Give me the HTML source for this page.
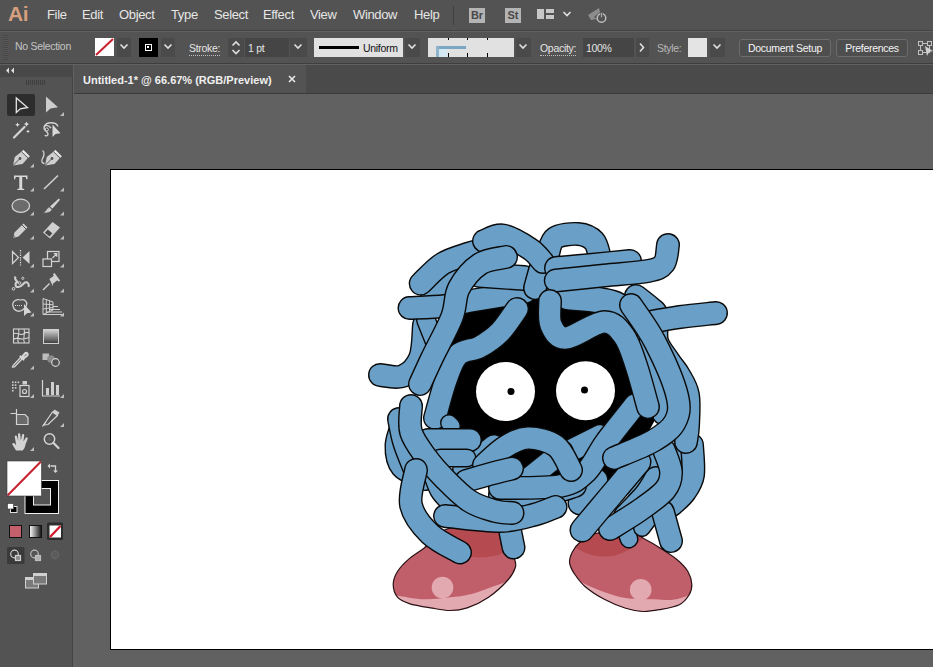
<!DOCTYPE html>
<html><head><meta charset="utf-8">
<style>
*{box-sizing:border-box;margin:0;padding:0}
html,body{width:933px;height:667px;overflow:hidden;background:#606060;font-family:"Liberation Sans",sans-serif;}
#app{position:relative;width:933px;height:667px;background:#616161;overflow:hidden}
.abs{position:absolute}
#menubar{left:0;top:0;width:933px;height:31px;background:#535353;border-bottom:1px solid #424242}
#menubar span{position:absolute;top:7px;font-size:13px;color:#e6e6e6;letter-spacing:-0.35px}
.brst{top:8px;width:16px;height:15px;background:#b4b4b4;color:#484848;font-size:11px;font-weight:bold;text-align:center;line-height:15px}
#ctrl{left:0;top:32px;width:933px;height:32px;background:#535353;border-bottom:1px solid #3e3e3e}
.lbl{font-size:10.5px;color:#e4e4e4;white-space:nowrap;letter-spacing:-0.3px}
.cbtn{top:7px;height:18px;border:1px solid #6c6c6c;border-radius:3px;background:#4e4e4e;color:#f4f4f4;font-size:10.5px;letter-spacing:-0.3px;text-align:center;line-height:16px;white-space:nowrap}
#tools{left:0;top:65px;width:73px;height:602px;background:#535353;border-right:1px solid #434343}
#tabbar{left:74px;top:65px;width:859px;height:29px;background:#4a4a4a;border-bottom:1px solid #3a3a3a}
#tab{left:74px;top:65px;width:232px;height:28px;background:#535353}
#canvas{left:74px;top:94px;width:859px;height:573px;background:#616161}
#art{left:110px;top:169px;width:830px;height:481px;background:#fff;border:1px solid #000}
</style></head><body>
<div id="app">
<div id="canvas" class="abs"></div>
<div id="art" class="abs"></div>
<div id="menubar" class="abs">
<div class="abs" style="left:8px;top:2px;font-size:21px;font-weight:bold;color:#d6a080;letter-spacing:-0.5px">Ai</div>
<span style="left:47px">File</span><span style="left:82px">Edit</span><span style="left:119px">Object</span><span style="left:171px">Type</span><span style="left:214px">Select</span><span style="left:263px">Effect</span><span style="left:310px">View</span><span style="left:353px">Window</span><span style="left:414px">Help</span>
<div class="abs" style="left:453px;top:6px;width:1px;height:19px;background:#404040"></div>
<div class="abs brst" style="left:469px">Br</div>
<div class="abs brst" style="left:505px">St</div>
<div class="abs" style="left:537px;top:9px;width:7px;height:10px;background:#c8c8c8"></div>
<div class="abs" style="left:546px;top:9px;width:8px;height:4px;background:#c8c8c8"></div>
<div class="abs" style="left:546px;top:15px;width:8px;height:4px;background:#c8c8c8"></div>
<svg class="abs" style="left:562px;top:10px" width="10" height="8"><path d="M1.5 2 L5 5.5 L8.5 2" fill="none" stroke="#e0e0e0" stroke-width="1.6"/></svg>
<svg class="abs" style="left:586px;top:6px" width="24" height="20"><path d="M2 9 L13 2 L14 6 L8 11 L11 13 L5 14 Z" fill="#8c8c8c"/><circle cx="15.500" cy="12" r="4.300" fill="none" stroke="#bdbdbd" stroke-width="1.5"/><rect x="14.700" y="6" width="1.600" height="6" fill="#bdbdbd" stroke="#535353" stroke-width="0.8"/></svg>
</div>
<div id="ctrl" class="abs">
<div class="abs" style="left:3px;top:3px;width:5px;height:25px;background:repeating-linear-gradient(180deg,#474747 0 1px,#585858 1px 2px)"></div>
<div class="abs lbl" style="left:15px;top:8px;color:#c4c4c4">No Selection</div>
<div class="abs" style="left:95px;top:6px;width:19px;height:18px;background:#fff"><svg width="19" height="18"><path d="M1 17 L18 1" stroke="#c8202f" stroke-width="2"/></svg></div>
<div class="abs" style="left:117px;top:6px;width:14px;height:19px;background:#4a4a4a"></div><svg class="abs" style="left:119px;top:11px" width="10" height="8"><path d="M1.500 1.500 L5 5 L8.500 1.500" fill="none" stroke="#e0e0e0" stroke-width="1.600"/></svg>
<div class="abs" style="left:139px;top:6px;width:19px;height:19px;background:#000"><div class="abs" style="left:6px;top:6px;width:7px;height:7px;border:1.500px solid #fff;background:#000"><div class="abs" style="left:1px;top:1px;width:2px;height:2px;background:#fff"></div></div></div>
<div class="abs" style="left:161px;top:6px;width:14px;height:19px;background:#4a4a4a"></div><svg class="abs" style="left:163px;top:11px" width="10" height="8"><path d="M1.500 1.500 L5 5 L8.500 1.500" fill="none" stroke="#e0e0e0" stroke-width="1.600"/></svg>
<div class="abs lbl" style="left:189px;top:10px;border-bottom:1px dotted #c0c0c0;line-height:13px">Stroke:</div>
<div class="abs" style="left:228px;top:6px;width:16px;height:19px;background:#4a4a4a"></div>
<svg class="abs" style="left:231px;top:8px" width="10" height="16"><path d="M1.500 5.500 L5 2 L8.500 5.500" fill="none" stroke="#e0e0e0" stroke-width="1.600"/><path d="M1.500 10 L5 13.500 L8.500 10" fill="none" stroke="#e0e0e0" stroke-width="1.600"/></svg>
<div class="abs" style="left:245px;top:6px;width:44px;height:19px;background:#454545"></div>
<div class="abs lbl" style="left:248px;top:9.500px">1 pt</div>
<div class="abs" style="left:290px;top:6px;width:17px;height:19px;background:#4a4a4a"></div><svg class="abs" style="left:293px;top:11px" width="10" height="8"><path d="M1.500 1.500 L5 5 L8.500 1.500" fill="none" stroke="#e0e0e0" stroke-width="1.600"/></svg>
<div class="abs" style="left:314px;top:6px;width:89px;height:19px;background:#e1e1e1"></div>
<div class="abs" style="left:319px;top:14px;width:40px;height:3px;background:#000"></div>
<div class="abs" style="left:363px;top:10px;font-size:10.500px;letter-spacing:-0.3px;color:#111">Uniform</div>
<div class="abs" style="left:405px;top:6px;width:15px;height:19px;background:#4a4a4a"></div><svg class="abs" style="left:407px;top:11px" width="10" height="8"><path d="M1.500 1.500 L5 5 L8.500 1.500" fill="none" stroke="#e0e0e0" stroke-width="1.600"/></svg>
<div class="abs" style="left:428px;top:6px;width:86px;height:19px;background:#e1e1e1"></div>
<div class="abs" style="left:439px;top:17px;width:8px;height:8px;background:#d4e8f3"></div><div class="abs" style="left:436px;top:14px;width:30px;height:3px;background:#7aa7c4"></div>
<div class="abs" style="left:436px;top:14px;width:3px;height:11px;background:#8fb4cc"></div>
<div class="abs" style="left:448px;top:6px;width:1px;height:19px;background:repeating-linear-gradient(180deg,#000 0 2px,transparent 2px 15px,#000 15px 19px)"></div>
<div class="abs" style="left:467px;top:6px;width:1px;height:19px;background:repeating-linear-gradient(180deg,#000 0 2px,transparent 2px 15px,#000 15px 19px)"></div>
<div class="abs" style="left:487px;top:6px;width:1px;height:19px;background:repeating-linear-gradient(180deg,#000 0 2px,transparent 2px 15px,#000 15px 19px)"></div>
<div class="abs" style="left:516px;top:6px;width:15px;height:19px;background:#4a4a4a"></div><svg class="abs" style="left:518px;top:11px" width="10" height="8"><path d="M1.500 1.500 L5 5 L8.500 1.500" fill="none" stroke="#e0e0e0" stroke-width="1.600"/></svg>
<div class="abs lbl" style="left:540px;top:9.500px;border-bottom:1px dotted #c0c0c0;line-height:13px">Opacity:</div>
<div class="abs" style="left:583px;top:6px;width:51px;height:19px;background:#454545"></div>
<div class="abs lbl" style="left:586px;top:9.500px">100%</div>
<div class="abs" style="left:636px;top:6px;width:13px;height:19px;background:#4a4a4a"></div>
<svg class="abs" style="left:638px;top:10px" width="8" height="11"><path d="M2 1.500 L5.500 5.500 L2 9.500" fill="none" stroke="#e0e0e0" stroke-width="1.600"/></svg>
<div class="abs lbl" style="left:657px;top:10px;color:#b8b8b8">Style:</div>
<div class="abs" style="left:688px;top:6px;width:19px;height:19px;background:#e4e4e4"></div>
<div class="abs" style="left:710px;top:6px;width:15px;height:19px;background:#4a4a4a"></div><svg class="abs" style="left:712px;top:11px" width="10" height="8"><path d="M1.500 1.500 L5 5 L8.500 1.500" fill="none" stroke="#e0e0e0" stroke-width="1.600"/></svg>
<div class="abs cbtn" style="left:739px;width:92px">Document Setup</div>
<div class="abs cbtn" style="left:836px;width:72px">Preferences</div>
<svg class="abs" style="left:917px;top:6px" width="16" height="20"><rect x="3.500" y="5.500" width="9" height="9" fill="none" stroke="#c0c0c0" stroke-width="1"/><rect x="1.500" y="3.500" width="4" height="4" fill="#535353" stroke="#c0c0c0"/><rect x="10.500" y="3.500" width="4" height="4" fill="#535353" stroke="#c0c0c0"/><rect x="1.500" y="12.500" width="4" height="4" fill="#535353" stroke="#c0c0c0"/><path d="M8 8 L16 13 L12 14 L10 18 Z" fill="#d0d0d0"/></svg>
</div>
<div id="tabbar" class="abs"></div>
<div id="tab" class="abs"><div class="abs" style="left:9px;top:9px;font-size:11px;font-weight:bold;color:#f0f0f0;white-space:nowrap">Untitled-1* @ 66.67% (RGB/Preview)</div><svg class="abs" style="left:214px;top:10px" width="8" height="8"><path d="M1 1 L7 7 M7 1 L1 7" stroke="#e8e8e8" stroke-width="1.600"/></svg></div>
<div id="tools" class="abs"></div>
<!--TOOLS-START-->
<svg class="abs" style="left:0;top:0" width="74" height="667" viewBox="0 0 74 667">
<defs><linearGradient id="gr1" x1="0" x2="0" y1="0" y2="1"><stop offset="0" stop-color="#d8d8d8"/><stop offset="1" stop-color="#3c3c3c"/></linearGradient>
<linearGradient id="gr2" x1="0" x2="1"><stop offset="0" stop-color="#fff"/><stop offset="1" stop-color="#111"/></linearGradient></defs>
<rect x="0" y="65" width="73" height="12" fill="#484848"/>
<path d="M9 67.500 L6 70.500 L9 73.500 Z M14 67.500 L11 70.500 L14 73.500 Z" fill="#dcdcdc"/>
<g stroke="#3f3f3f" stroke-width="1"><path d="M26.500 80v5M28.500 80v5M30.500 80v5M32.500 80v5M34.500 80v5M36.500 80v5M38.500 80v5M40.500 80v5M42.500 80v5M44.500 80v5"/></g>
<!-- selection -->
<rect x="7" y="94" width="28" height="22" rx="2" fill="#2d2d2d"/>
<path d="M16.300 98 L16.300 112.500 L20.300 108.800 L27.500 107.500 Z" fill="none" stroke="#e6e6e6" stroke-width="1.300" stroke-linejoin="miter"/>
<path d="M46 96.500 L46 112.500 L50.500 108.500 L58 107.300 Z" fill="#cdcdcd"/>
<!-- flyout triangles -->
<g fill="#bdbdbd">
<path d="M64 112v4h-4z"/>
<path d="M34 163.500v4h-4z"/><path d="M34 187.500v4h-4z"/><path d="M64 187.500v4h-4z"/>
<path d="M34 211.500v4h-4z"/><path d="M64 211.500v4h-4z"/><path d="M34 235.500v4h-4z"/><path d="M64 235.500v4h-4z"/>
<path d="M34 263.500v4h-4z"/><path d="M64 263.500v4h-4z"/><path d="M34 288.500v4h-4z"/><path d="M64 288.500v4h-4z"/>
<path d="M34 312.500v4h-4z"/><path d="M64 312.500v4h-4z"/>
<path d="M34 365.500v4h-4z"/><path d="M34 394v4h-4z"/><path d="M64 394v4h-4z"/>
<path d="M64 423v4h-4z"/><path d="M34 447v4h-4z"/>
</g>
<!-- magic wand -->
<path d="M14 137.500 L24.500 127" stroke="#d4d4d4" stroke-width="2.200" stroke-linecap="round"/>
<path d="M17.500 122.500l.7 1.600 1.600.7-1.600.7-.7 1.600-.7-1.600-1.600-.7 1.600-.7zM26.500 121.500l.8 1.800 1.800.8-1.800.8-.8 1.800-.8-1.800-1.800-.8 1.800-.8zM28 129.500l.6 1.300 1.300.6-1.300.6-.6 1.300-.6-1.300-1.300-.6 1.300-.6z" fill="#e0e0e0"/>
<!-- lasso -->
<path d="M51 128 C48 124.500 44 124.500 44 128 C44 131 48 131.500 48 134 C48 136 45.500 136.500 45 135" fill="none" stroke="#d4d4d4" stroke-width="1.400"/>
<path d="M44.500 126.500 C46 121.500 56 121.500 58 126.500" fill="none" stroke="#d4d4d4" stroke-width="1.400"/>
<circle cx="46.800" cy="129.500" r="1.600" fill="none" stroke="#d4d4d4" stroke-width="1"/>
<path d="M52.500 124.500 L52.500 137 L55.500 134 L60.500 133.300 Z" fill="#d8d8d8"/>
<!-- pen -->
<g id="pen"><path d="M13 165.500 L14.800 157 L22 151.200 L28.300 157.500 L22.500 164 Z" fill="#cfcfcf"/><path d="M13 165.500 L19.500 159" stroke="#535353" stroke-width="1"/><circle cx="20" cy="158.500" r="1.400" fill="#535353"/><path d="M23.300 149.800 L29.800 156.200 L28.300 157.800 L21.800 151.400 Z" fill="#e8e8e8"/><path d="M21.500 151.800 L28 158" stroke="#535353" stroke-width="0.900"/></g>
<use href="#pen" x="32" y="0"/>
<path d="M42.500 150.500 C45 152 44 156 42.500 158.500 C41 161 42 163.500 44.500 163.500" fill="none" stroke="#d4d4d4" stroke-width="1.300"/>
<!-- Type -->
<path d="M14 175.500h13.500v3.800h-1.200l-.5-2.300h-3.600v11.500l2 .4v1.100h-6.900v-1.100l2-.4V177h-3.600l-.5 2.300H14z" fill="#d8d8d8"/>
<!-- line -->
<path d="M44 189 L58 175.500" stroke="#cfcfcf" stroke-width="1.600"/>
<!-- ellipse -->
<ellipse cx="20.800" cy="205.800" rx="8.800" ry="6.600" fill="#6b6b6b" stroke="#d4d4d4" stroke-width="1.200"/>
<!-- brush -->
<path d="M58.800 198.500 L60 199.700 L52.500 208.500 L50 206.500 Z" fill="#d4d4d4"/><path d="M49.300 207.300 L51.800 209.500 C50.500 212.500 46.500 213 43.500 212.500 C46.500 211.500 46.500 208.500 49.300 207.300Z" fill="#c8c8c8"/>
<!-- pencil -->
<path d="M13.200 238 L14.500 232.500 L23.500 223.500 L27.500 227.500 L18.500 236.500 Z" fill="#cfcfcf"/><path d="M22 225 L26 229" stroke="#535353" stroke-width="1"/><path d="M13.200 238 L15 236.500 L14 235.500Z" fill="#535353"/>
<!-- eraser -->
<path d="M43 232.500 L52.500 222 L60 227.500 L50 238.500 Z" fill="#d0d0d0"/><path d="M44.800 232.800 L47.800 229.500 L52.300 233.300 L49.600 236.500 Z" fill="#4a4a4a"/>
<!-- reflect -->
<path d="M12.500 251.500 L12.500 263.500 L18.500 257.500 Z" fill="none" stroke="#d4d4d4" stroke-width="1.200"/><path d="M29.500 251 L29.500 264 L22.500 257.500 Z" fill="#d4d4d4"/><path d="M20.500 250 V266" stroke="#e4e4e4" stroke-width="1.200" stroke-dasharray="1.200 1.200"/>
<!-- scale -->
<rect x="47.500" y="251.500" width="11.500" height="10" fill="none" stroke="#d4d4d4" stroke-width="1.200"/><rect x="43" y="259" width="8.500" height="7.500" fill="#535353" stroke="#d4d4d4" stroke-width="1.200"/><path d="M52.500 258 L56.500 254 M53.800 253.700 H56.800 V256.700" fill="none" stroke="#d4d4d4" stroke-width="1.200"/>
<!-- warp -->
<path d="M15.500 276.500 C14 279 16 280.500 17.500 282 C14.500 283 15 287.500 18.500 287 C22 286.500 23 283.500 25 282.500 C27.500 281.500 29.500 284 28.500 287" fill="none" stroke="#d0d0d0" stroke-width="2"/><circle cx="13.500" cy="288.800" r="1.300" fill="none" stroke="#d8d8d8" stroke-width="1"/><circle cx="19.500" cy="283" r="1.300" fill="#535353" stroke="#d8d8d8" stroke-width="0.900"/><circle cx="22.800" cy="278.300" r="1.100" fill="#535353" stroke="#d8d8d8" stroke-width="0.900"/>
<!-- pin -->
<path d="M49 279.500 L53 275.500 L51.800 274.300 L53.300 272.800 L59.800 279.300 L58.300 280.800 L57.100 279.600 L53.100 283.600 L53.500 286 Z" fill="#d0d0d0" transform="rotate(8 52 282)"/><path d="M43 290 L49.500 283.500" stroke="#d0d0d0" stroke-width="1.500"/>
<!-- shape builder -->
<path d="M13 306 C11.500 301.500 17 298.500 20.500 300 C24.500 298.500 27.500 302 26.500 305 C26 309 20 312 17.500 311 C15 310.500 13.500 308.500 13 306Z" fill="none" stroke="#d0d0d0" stroke-width="1.300"/><path d="M15 305.500 H23" stroke="#d8d8d8" stroke-width="1.200" stroke-dasharray="1 1"/><path d="M24 304 L24 316 L27 313.200 L31.500 312.500 Z" fill="#d4d4d4"/>
<!-- perspective grid -->
<g fill="none" stroke="#cfcfcf" stroke-width="1"><path d="M43 298.500 V314.500 L53 310 V302 Z"/><path d="M46.300 299.700 V313 M49.600 300.800 V311.500 M43 304 L53 304.800 M43 309 L53 307.500"/><path d="M43 314.500 H63 M46 312 H62 M49 309.500 H60 M53 306.500 H58"/></g>
<!-- mesh -->
<g fill="none" stroke="#d4d4d4" stroke-width="1.100"><rect x="13.500" y="329" width="15.500" height="14"/><path d="M13.500 334 C17 331 20 337 24 333.500 C26 332 27.500 332 29 333 M13.500 339.500 C17 336 21 341.500 29 337.500 M18.500 329 C20.500 333 16 338 18.500 343 M24 329 C26 334 22 338 24.500 343"/></g>
<!-- gradient -->
<rect x="43.500" y="329.500" width="15" height="14" fill="url(#gr1)" stroke="#d0d0d0" stroke-width="1"/>
<!-- eyedropper -->
<path d="M13 365.500 L12.500 367 L14.500 366.800 L22.500 358.500 L21 357 Z" fill="none" stroke="#d4d4d4" stroke-width="1.300"/><path d="M20.500 356.500 L23.500 359.500 M21.800 357.500 L25 353.500 C26.500 352 28.500 354 27.200 355.500 L23 359" fill="none" stroke="#d8d8d8" stroke-width="2.200" stroke-linecap="round"/>
<!-- blend -->
<rect x="42.500" y="353.500" width="6.500" height="6.500" fill="#bdbdbd"/><circle cx="51" cy="359" r="3.800" fill="#8a8a8a"/><circle cx="55.500" cy="362.500" r="3.800" fill="#535353" stroke="#d4d4d4" stroke-width="1.200"/>
<!-- symbol sprayer -->
<g fill="#cfcfcf"><rect x="12" y="381.500" width="1.600" height="1.600"/><rect x="14.800" y="381.500" width="1.600" height="1.600"/><rect x="17.600" y="381.500" width="1.600" height="1.600"/><rect x="12" y="384.300" width="1.600" height="1.600"/><rect x="14.800" y="384.300" width="1.600" height="1.600"/><rect x="12" y="387.100" width="1.600" height="1.600"/><rect x="14.800" y="387.100" width="1.600" height="1.600"/><rect x="12" y="389.900" width="1.600" height="1.600"/><rect x="22.500" y="381" width="4.500" height="3.500"/></g>
<rect x="20" y="385.500" width="9" height="11" fill="none" stroke="#d4d4d4" stroke-width="1.200"/><circle cx="24.500" cy="391.500" r="2" fill="none" stroke="#d4d4d4" stroke-width="1.200"/>
<!-- graph -->
<path d="M42.500 380 V396 H60" fill="none" stroke="#d4d4d4" stroke-width="1.200"/><rect x="46" y="388" width="3" height="7" fill="#cfcfcf"/><rect x="51" y="382" width="3" height="13" fill="#cfcfcf"/><rect x="56" y="385" width="3" height="10" fill="#cfcfcf"/>
<!-- artboard -->
<path d="M10.500 413.500 H16.500 M16.500 409 V414" stroke="#d4d4d4" stroke-width="1.200"/><path d="M16.500 414.500 H25 L28 417.500 V424.500 H16.500 Z" fill="#6a6a6a" stroke="#d4d4d4" stroke-width="1.200"/>
<!-- slice -->
<path d="M43.500 425 L52.500 412 L57.500 415.500 L48 424.500 Z" fill="none" stroke="#d4d4d4" stroke-width="1.200"/><path d="M52.500 412 L54.500 409.500 L59.500 412.500 L57.500 415.500Z" fill="#d0d0d0"/><path d="M42.500 426.500 L46 422" stroke="#d4d4d4" stroke-width="1.200"/>
<!-- hand -->
<path d="M16 450.500 L12.500 444.800 C11.600 443.300 13.400 442.200 14.600 443.400 L16.200 445.200 L14.800 437 C14.500 435.300 16.600 434.900 17 436.500 L18.300 441 L18 434.500 C18 432.800 20.200 432.800 20.300 434.500 L20.800 440.800 L22 435 C22.300 433.400 24.400 433.800 24.200 435.400 L23.400 441.500 L25.600 438 C26.500 436.600 28.300 437.700 27.600 439.200 L25.500 444.500 C25 447.500 24 449 22.800 450.500 Z" fill="#d4d4d4"/>
<!-- zoom -->
<circle cx="49.500" cy="439" r="5.200" fill="none" stroke="#d4d4d4" stroke-width="1.500"/><path d="M53.500 443 L58.500 448" stroke="#d4d4d4" stroke-width="2.200" stroke-linecap="round"/><circle cx="49.500" cy="439" r="2.300" fill="#5e5e5e"/>
<!-- fill/stroke -->
<rect x="25" y="480.500" width="33.500" height="33" fill="#000" stroke="#f0f0f0" stroke-width="1"/>
<rect x="33.500" y="488.500" width="17" height="16.500" fill="#535353" stroke="#f0f0f0" stroke-width="1"/>
<rect x="7" y="461" width="34.500" height="35" fill="#fff"/>
<path d="M7.500 495.500 L41 461.500" stroke="#c8202f" stroke-width="2"/>
<rect x="7" y="461" width="34.500" height="35" fill="none" stroke="#3a3a3a" stroke-width="0.600"/>
<!-- swap -->
<path d="M50.500 466 H55.500 V471" fill="none" stroke="#d4d4d4" stroke-width="1.300"/><path d="M50 463.500 V468.500 L47.500 466 Z M53 470.500 H58 L55.500 473 Z" fill="#d4d4d4"/>
<!-- default -->
<rect x="10.500" y="506.500" width="6.500" height="6" fill="#000" stroke="#e0e0e0" stroke-width="1"/><rect x="7.500" y="503.500" width="6" height="5.500" fill="#fff" stroke="#333" stroke-width="0.600"/>
<!-- color buttons -->
<rect x="9.500" y="525.500" width="12" height="12" fill="#c4606b" stroke="#111" stroke-width="1"/>
<rect x="29.500" y="525.500" width="12" height="12" fill="url(#gr2)" stroke="#111" stroke-width="1"/>
<rect x="47" y="522.500" width="16" height="17.500" rx="1.500" fill="#2d2d2d"/>
<rect x="49.500" y="525.500" width="11.500" height="12" fill="#fff"/><path d="M50 537 L60.500 526" stroke="#d01c2c" stroke-width="2.300"/>
<!-- draw modes -->
<rect x="7" y="547" width="17.500" height="17" rx="1.500" fill="#3a3a3a"/>
<g fill="none" stroke="#cfcfcf" stroke-width="1.200"><circle cx="14.500" cy="554" r="3.800"/><rect x="15.500" y="555.500" width="5" height="5" fill="#8a8a8a"/></g>
<g fill="none" stroke="#bdbdbd" stroke-width="1.200"><circle cx="34.500" cy="554" r="3.800"/><rect x="35.500" y="555.500" width="5" height="5" fill="#b0b0b0"/></g>
<circle cx="55" cy="555" r="3.800" fill="#5c5c5c" stroke="#666" stroke-width="1.200"/>
<!-- screen mode -->
<rect x="25.500" y="577.500" width="13" height="10.500" fill="#7a7a7a" stroke="#d0d0d0" stroke-width="1"/><rect x="25.500" y="577.500" width="13" height="2.500" fill="#d0d0d0"/>
<rect x="33.500" y="573.500" width="13" height="10.500" fill="#7a7a7a" stroke="#d0d0d0" stroke-width="1"/><rect x="33.500" y="573.500" width="13" height="2.500" fill="#d0d0d0"/>
</svg>
<!--TOOLS-END-->
<!--DRAW-START--><svg class="abs" style="left:0;top:0" width="933" height="667" viewBox="0 0 933 667">

<!-- feet -->
<defs><path id="lf" d="M424.3 547.9 C417.5 553.0 413.8 554.7 409.3 558.6 C404.8 562.5 400.2 567.2 397.5 571.5 C394.8 575.8 393.2 580.0 393.2 584.3 C393.2 588.6 394.8 594.0 397.5 597.2 C400.2 600.4 403.8 601.8 409.3 603.6 C414.8 605.4 423.9 606.8 430.7 607.9 C437.5 609.0 443.9 610.5 450.0 610.5 C456.1 610.5 460.8 610.1 467.2 607.9 C473.6 605.7 481.8 601.9 488.6 597.2 C495.4 592.6 503.4 585.0 507.9 580.0 C512.4 575.0 514.3 570.8 515.4 567.2 C516.5 563.6 515.2 560.9 514.3 558.6 C513.4 556.3 512.1 555.5 510.0 553.2 C507.9 550.9 503.3 548.9 501.5 545.0 C499.7 541.1 507.6 532.8 499.0 530.0 C490.4 527.2 462.4 525.0 450.0 528.0 C437.6 531.0 431.1 542.8 424.3 547.9Z"/><path id="rf" d="M593.6 534.0 C586.2 535.9 584.3 538.5 580.7 541.5 C577.1 544.5 574.1 548.6 572.2 552.2 C570.4 555.8 569.2 559.3 569.6 562.9 C570.0 566.5 571.7 569.7 574.3 573.6 C576.9 577.5 580.0 582.2 585.0 586.5 C590.0 590.8 597.5 595.7 604.3 599.3 C611.1 602.9 619.3 606.3 625.7 608.3 C632.1 610.3 637.2 611.3 642.9 611.5 C648.6 611.7 653.9 610.7 660.0 609.6 C666.1 608.5 674.5 607.1 679.3 604.7 C684.1 602.3 686.9 598.4 689.0 595.0 C691.1 591.6 692.0 588.2 691.8 584.3 C691.6 580.4 690.3 575.6 687.9 571.5 C685.5 567.4 681.9 563.6 677.2 559.7 C672.6 555.8 665.4 551.3 660.0 547.9 C654.6 544.5 650.8 542.3 645.0 539.3 C639.2 536.3 633.6 530.9 625.0 530.0 C616.4 529.1 601.0 532.1 593.6 534.0Z"/></defs>
<use href="#lf" fill="#c05f6a"/><use href="#rf" fill="#c05f6a"/>
<g stroke="#2a1215" stroke-width="1.200">


</g>
<clipPath id="lfc"><use href="#lf"/></clipPath><clipPath id="rfc"><use href="#rf"/></clipPath>
<g clip-path="url(#lfc)">
<path d="M445.0 520.0 C446.2 524.7 447.8 541.9 452.0 548.0 C456.2 554.1 463.7 555.1 470.0 556.5 C476.3 557.9 484.2 557.6 490.0 556.5 C495.8 555.4 500.8 556.1 505.0 550.0 C509.2 543.9 513.3 525.0 515.0 520.0 Z" fill="#b54a50"/>
<path d="M385.0 594.0 C387.4 594.3 393.1 595.1 399.7 596.0 C406.2 596.9 415.4 599.1 424.3 599.3 C433.2 599.5 445.1 597.9 453.0 597.0 C460.9 596.1 464.8 595.8 471.5 594.0 C478.2 592.2 486.6 588.8 493.0 586.5 C499.4 584.2 504.7 582.8 510.0 580.0 C515.3 577.2 522.5 571.7 525.0 570.0 L525 625 L385 625 Z" fill="#e3a9b0"/>
<circle cx="442.500" cy="587.500" r="10.800" fill="#e3a9b0"/>
</g>
<g clip-path="url(#rfc)">
<path d="M570.0 540.0 C571.1 541.3 572.5 545.4 576.4 548.0 C580.3 550.6 587.2 554.2 593.6 555.4 C600.0 556.6 608.2 557.0 615.0 555.4 C621.8 553.8 629.3 549.9 634.3 545.7 C639.3 541.5 650.7 534.3 645.0 530.0 C639.3 525.7 607.5 521.7 600.0 520.0 Z" fill="#b54a50"/>
<path d="M565.0 572.0 C568.0 573.8 576.5 579.7 583.0 583.0 C589.5 586.3 596.9 589.5 604.0 592.0 C611.1 594.5 617.4 596.8 625.7 598.0 C634.0 599.2 645.7 599.0 653.6 599.3 C661.5 599.6 666.9 600.5 673.0 599.8 C679.1 599.1 685.5 596.6 690.0 595.0 C694.5 593.4 698.3 590.8 700.0 590.0 L700 625 L565 625 Z" fill="#e3a9b0"/>
<circle cx="640.700" cy="589.700" r="10.800" fill="#e3a9b0"/>
</g>
<g fill="none" stroke="#2a1215" stroke-width="1.200"><use href="#lf"/><use href="#rf"/></g>
<!-- filler blobs -->
<path d="M625 455 L690 440 L695 480 L662 505 L628 500 Z" fill="#6aa0c7"/>
<!-- face -->
<path d="M455 305 L545 296 L640 320 L655 420 L630 466 L604 486 L560 496 L470 482 L432 420 Z" fill="#000"/>
<circle cx="505.500" cy="391.500" r="29.500" fill="#fff"/><circle cx="511" cy="391.500" r="3.500" fill="#000"/>
<circle cx="585.500" cy="390.700" r="29.500" fill="#fff"/><circle cx="584.500" cy="390" r="3.500" fill="#000"/>

<g fill="none" stroke-linecap="round" stroke-linejoin="round">
<path d="M404 420 C402.8 424.2 396.8 437.2 396.5 445 C396.2 452.8 397.2 461.3 402 467 C406.8 472.7 421.2 477.0 425 479" stroke="#0a0a0a" stroke-width="24"/><path d="M404 420 C402.8 424.2 396.8 437.2 396.5 445 C396.2 452.8 397.2 461.3 402 467 C406.8 472.7 421.2 477.0 425 479" stroke="#6aa0c7" stroke-width="21.2"/>
<path d="M399 419 C399.8 422.8 401.5 433.8 404 442 C406.5 450.2 412.3 463.7 414 468" stroke="#0a0a0a" stroke-width="24"/><path d="M399 419 C399.8 422.8 401.5 433.8 404 442 C406.5 450.2 412.3 463.7 414 468" stroke="#6aa0c7" stroke-width="21.2"/>
<path d="M692 445 C692.2 450.0 694.2 467.2 693 475 C691.8 482.8 688.5 487.0 685 492 C681.5 497.0 674.2 502.8 672 505" stroke="#0a0a0a" stroke-width="24"/><path d="M692 445 C692.2 450.0 694.2 467.2 693 475 C691.8 482.8 688.5 487.0 685 492 C681.5 497.0 674.2 502.8 672 505" stroke="#6aa0c7" stroke-width="21.2"/>
<path d="M636 296 C638.5 298.0 647.5 304.7 651 308 C654.5 311.3 656.0 310.5 657 316 C658.0 321.5 655.0 333.5 657 341 C659.0 348.5 665.3 355.3 669 361 C672.7 366.7 675.8 369.3 679 375 C682.2 380.7 686.5 386.5 688 395 C689.5 403.5 688.3 418.2 688 426 C687.7 433.8 686.3 439.3 686 442" stroke="#0a0a0a" stroke-width="24"/><path d="M636 296 C638.5 298.0 647.5 304.7 651 308 C654.5 311.3 656.0 310.5 657 316 C658.0 321.5 655.0 333.5 657 341 C659.0 348.5 665.3 355.3 669 361 C672.7 366.7 675.8 369.3 679 375 C682.2 380.7 686.5 386.5 688 395 C689.5 403.5 688.3 418.2 688 426 C687.7 433.8 686.3 439.3 686 442" stroke="#6aa0c7" stroke-width="21.2"/>
<path d="M380 375 C383.8 375.2 396.3 378.8 403 376 C409.7 373.2 416.5 366.5 420 358 C423.5 349.5 423.3 330.5 424 325" stroke="#0a0a0a" stroke-width="24"/><path d="M380 375 C383.8 375.2 396.3 378.8 403 376 C409.7 373.2 416.5 366.5 420 358 C423.5 349.5 423.3 330.5 424 325" stroke="#6aa0c7" stroke-width="21.2"/>
<path d="M426 320 L436 345" stroke="#0a0a0a" stroke-width="20"/><path d="M426 320 L436 345" stroke="#6aa0c7" stroke-width="17.2"/>
<path d="M432 298 C434.0 296.0 439.7 289.8 444 286 C448.3 282.2 455.7 276.8 458 275" stroke="#0a0a0a" stroke-width="24"/><path d="M432 298 C434.0 296.0 439.7 289.8 444 286 C448.3 282.2 455.7 276.8 458 275" stroke="#6aa0c7" stroke-width="21.2"/>
<path d="M420.7 283.6 C424.4 280.3 434.8 268.6 442.8 263.6 C450.9 258.6 462.1 255.8 469 253.5 C475.9 251.2 481.5 250.6 484 250" stroke="#0a0a0a" stroke-width="24"/><path d="M420.7 283.6 C424.4 280.3 434.8 268.6 442.8 263.6 C450.9 258.6 462.1 255.8 469 253.5 C475.9 251.2 481.5 250.6 484 250" stroke="#6aa0c7" stroke-width="21.2"/>
<path d="M409.5 308 C415.4 307.7 434.9 307.2 445 306 C455.1 304.8 456.7 303.3 470 301 C483.3 298.7 515.8 293.5 525 292" stroke="#0a0a0a" stroke-width="24"/><path d="M409.5 308 C415.4 307.7 434.9 307.2 445 306 C455.1 304.8 456.7 303.3 470 301 C483.3 298.7 515.8 293.5 525 292" stroke="#6aa0c7" stroke-width="21.2"/>
<path d="M480 275 L524 278" stroke="#0a0a0a" stroke-width="26"/><path d="M480 275 L524 278" stroke="#6aa0c7" stroke-width="23.2"/>
<path d="M540 270 L535 288" stroke="#0a0a0a" stroke-width="24"/><path d="M540 270 L535 288" stroke="#6aa0c7" stroke-width="21.2"/>
<path d="M548 254 C549.2 251.3 550.0 241.3 555 238 C560.0 234.7 571.5 233.5 578 234 C584.5 234.5 590.3 237.0 594 241 C597.7 245.0 599.0 255.2 600 258" stroke="#0a0a0a" stroke-width="24"/><path d="M548 254 C549.2 251.3 550.0 241.3 555 238 C560.0 234.7 571.5 233.5 578 234 C584.5 234.5 590.3 237.0 594 241 C597.7 245.0 599.0 255.2 600 258" stroke="#6aa0c7" stroke-width="21.2"/>
<path d="M484 241 C487.2 240.1 495.3 234.2 503 235.5 C510.7 236.8 523.3 244.6 530 249 C536.7 253.4 540.8 259.8 543 262" stroke="#0a0a0a" stroke-width="24"/><path d="M484 241 C487.2 240.1 495.3 234.2 503 235.5 C510.7 236.8 523.3 244.6 530 249 C536.7 253.4 540.8 259.8 543 262" stroke="#6aa0c7" stroke-width="21.2"/>
<path d="M568 297 C575.8 298.2 603.0 298.8 615 304 C627.0 309.2 635.8 324.0 640 328" stroke="#0a0a0a" stroke-width="27"/><path d="M568 297 C575.8 298.2 603.0 298.8 615 304 C627.0 309.2 635.8 324.0 640 328" stroke="#6aa0c7" stroke-width="24.2"/>
<path d="M556 268 C561.7 267.5 577.7 266.2 590 265 C602.3 263.8 623.3 261.7 630 261" stroke="#0a0a0a" stroke-width="24"/><path d="M556 268 C561.7 267.5 577.7 266.2 590 265 C602.3 263.8 623.3 261.7 630 261" stroke="#6aa0c7" stroke-width="21.2"/>
<path d="M555.8 280.5 C563.8 279.7 588.6 277.1 604 275.5 C619.4 273.9 638.0 273.0 648 271 C658.0 269.0 660.7 267.8 664 263.5 C667.3 259.2 667.3 248.1 668 245" stroke="#0a0a0a" stroke-width="24"/><path d="M555.8 280.5 C563.8 279.7 588.6 277.1 604 275.5 C619.4 273.9 638.0 273.0 648 271 C658.0 269.0 660.7 267.8 664 263.5 C667.3 259.2 667.3 248.1 668 245" stroke="#6aa0c7" stroke-width="21.2"/>
<path d="M716 313 C710.0 313.7 692.7 315.2 680 317 C667.3 318.8 646.7 322.8 640 324" stroke="#0a0a0a" stroke-width="24"/><path d="M716 313 C710.0 313.7 692.7 315.2 680 317 C667.3 318.8 646.7 322.8 640 324" stroke="#6aa0c7" stroke-width="21.2"/>
<path d="M494 446 L464 470" stroke="#0a0a0a" stroke-width="24"/><path d="M494 446 L464 470" stroke="#6aa0c7" stroke-width="21.2"/>
<path d="M560 456 L600 436" stroke="#0a0a0a" stroke-width="24"/><path d="M560 456 L600 436" stroke="#6aa0c7" stroke-width="21.2"/>
<path d="M522 484 L562 452" stroke="#0a0a0a" stroke-width="24"/><path d="M522 484 L562 452" stroke="#6aa0c7" stroke-width="21.2"/>
<path d="M596 480 L580 503" stroke="#0a0a0a" stroke-width="25"/><path d="M596 480 L580 503" stroke="#6aa0c7" stroke-width="22.2"/>
<path d="M500 495 C507.5 494.8 532.5 495.5 545 494 C557.5 492.5 570.0 487.3 575 486" stroke="#0a0a0a" stroke-width="24"/><path d="M500 495 C507.5 494.8 532.5 495.5 545 494 C557.5 492.5 570.0 487.3 575 486" stroke="#6aa0c7" stroke-width="21.2"/>
<path d="M635 405 C630.2 411.2 614.2 430.8 606 442 C597.8 453.2 593.7 464.7 586 472 C578.3 479.3 574.3 483.3 560 486 C545.7 488.7 510.0 487.7 500 488" stroke="#0a0a0a" stroke-width="24"/><path d="M635 405 C630.2 411.2 614.2 430.8 606 442 C597.8 453.2 593.7 464.7 586 472 C578.3 479.3 574.3 483.3 560 486 C545.7 488.7 510.0 487.7 500 488" stroke="#6aa0c7" stroke-width="21.2"/>
<path d="M647 345 C648.7 350.8 654.5 368.3 657 380 C659.5 391.7 661.2 409.2 662 415" stroke="#0a0a0a" stroke-width="20"/><path d="M647 345 C648.7 350.8 654.5 368.3 657 380 C659.5 391.7 661.2 409.2 662 415" stroke="#6aa0c7" stroke-width="17.2"/>
<path d="M624 524 L629 539" stroke="#0a0a0a" stroke-width="19"/><path d="M624 524 L629 539" stroke="#6aa0c7" stroke-width="16.2"/>
<path d="M625 516 C628.3 512.5 639.8 501.3 645 495 C650.2 488.7 654.2 480.8 656 478" stroke="#0a0a0a" stroke-width="24"/><path d="M625 516 C628.3 512.5 639.8 501.3 645 495 C650.2 488.7 654.2 480.8 656 478" stroke="#6aa0c7" stroke-width="21.2"/>
<path d="M642 528 L648 520" stroke="#0a0a0a" stroke-width="18"/><path d="M642 528 L648 520" stroke="#6aa0c7" stroke-width="15.2"/>
<path d="M663 512 L671 541" stroke="#0a0a0a" stroke-width="24"/><path d="M663 512 L671 541" stroke="#6aa0c7" stroke-width="21.2"/>
<path d="M664 450 C665.2 453.7 670.8 465.3 671 472 C671.2 478.7 670.2 483.7 665 490 C659.8 496.3 649.2 503.5 640 510 C630.8 516.5 615.0 525.8 610 529" stroke="#0a0a0a" stroke-width="24"/><path d="M664 450 C665.2 453.7 670.8 465.3 671 472 C671.2 478.7 670.2 483.7 665 490 C659.8 496.3 649.2 503.5 640 510 C630.8 516.5 615.0 525.8 610 529" stroke="#6aa0c7" stroke-width="21.2"/>
<path d="M639 462 C633.8 468.2 617.5 487.7 608 499 C598.5 510.3 586.3 524.8 582 530" stroke="#0a0a0a" stroke-width="25"/><path d="M639 462 C633.8 468.2 617.5 487.7 608 499 C598.5 510.3 586.3 524.8 582 530" stroke="#6aa0c7" stroke-width="22.2"/>
<path d="M631 305 C635.0 311.2 647.3 327.0 655 342 C662.7 357.0 673.7 381.7 677 395 C680.3 408.3 679.0 414.3 675 422 C671.0 429.7 663.2 435.0 653 441 C642.8 447.0 620.5 455.2 614 458" stroke="#0a0a0a" stroke-width="24"/><path d="M631 305 C635.0 311.2 647.3 327.0 655 342 C662.7 357.0 673.7 381.7 677 395 C680.3 408.3 679.0 414.3 675 422 C671.0 429.7 663.2 435.0 653 441 C642.8 447.0 620.5 455.2 614 458" stroke="#6aa0c7" stroke-width="21.2"/>
<path d="M550 301 C550.2 305.0 548.3 318.8 551 325 C553.7 331.2 557.2 338.5 566 338 C574.8 337.5 594.3 322.3 604 322 C613.7 321.7 618.7 328.8 624 336 C629.3 343.2 632.0 353.2 636 365 C640.0 376.8 646.0 400.0 648 407" stroke="#0a0a0a" stroke-width="24"/><path d="M550 301 C550.2 305.0 548.3 318.8 551 325 C553.7 331.2 557.2 338.5 566 338 C574.8 337.5 594.3 322.3 604 322 C613.7 321.7 618.7 328.8 624 336 C629.3 343.2 632.0 353.2 636 365 C640.0 376.8 646.0 400.0 648 407" stroke="#6aa0c7" stroke-width="21.2"/>
<path d="M517 309 C514.2 312.8 506.2 325.7 500 332 C493.8 338.3 486.5 343.2 479.5 347 C472.5 350.8 463.6 349.5 458 355 C452.4 360.5 449.8 369.5 446 380 C442.2 390.5 436.8 411.7 435 418" stroke="#0a0a0a" stroke-width="24"/><path d="M517 309 C514.2 312.8 506.2 325.7 500 332 C493.8 338.3 486.5 343.2 479.5 347 C472.5 350.8 463.6 349.5 458 355 C452.4 360.5 449.8 369.5 446 380 C442.2 390.5 436.8 411.7 435 418" stroke="#6aa0c7" stroke-width="21.2"/>
<path d="M506 257 C501.7 258.2 487.8 258.8 480 264 C472.2 269.2 463.7 279.2 459 288 C454.3 296.8 456.5 305.3 452 317 C447.5 328.7 437.3 346.8 432 358 C426.7 369.2 422.0 379.7 420 384" stroke="#0a0a0a" stroke-width="24"/><path d="M506 257 C501.7 258.2 487.8 258.8 480 264 C472.2 269.2 463.7 279.2 459 288 C454.3 296.8 456.5 305.3 452 317 C447.5 328.7 437.3 346.8 432 358 C426.7 369.2 422.0 379.7 420 384" stroke="#6aa0c7" stroke-width="21.2"/>
<path d="M449 423 L452 426" stroke="#0a0a0a" stroke-width="18"/><path d="M449 423 L452 426" stroke="#6aa0c7" stroke-width="15.2"/>
<path d="M428 440 L470 440" stroke="#0a0a0a" stroke-width="24"/><path d="M428 440 L470 440" stroke="#6aa0c7" stroke-width="21.2"/>
<path d="M440 458 L467 458" stroke="#0a0a0a" stroke-width="19"/><path d="M440 458 L467 458" stroke="#6aa0c7" stroke-width="16.2"/>
<path d="M430 462 C431.7 466.7 435.8 482.7 440 490 C444.2 497.3 452.5 503.3 455 506" stroke="#0a0a0a" stroke-width="22"/><path d="M430 462 C431.7 466.7 435.8 482.7 440 490 C444.2 497.3 452.5 503.3 455 506" stroke="#6aa0c7" stroke-width="19.2"/>
<path d="M508 520 L513.5 547.5" stroke="#0a0a0a" stroke-width="24"/><path d="M508 520 L513.5 547.5" stroke="#6aa0c7" stroke-width="21.2"/>
<path d="M445 516 C454.2 516.8 485.0 521.2 500 521 C515.0 520.8 525.8 516.8 535 514.5 C544.2 512.2 552.1 508.2 555.5 507" stroke="#0a0a0a" stroke-width="24"/><path d="M445 516 C454.2 516.8 485.0 521.2 500 521 C515.0 520.8 525.8 516.8 535 514.5 C544.2 512.2 552.1 508.2 555.5 507" stroke="#6aa0c7" stroke-width="21.2"/>
<path d="M484 465 C487.5 462.0 497.7 451.5 505 447 C512.3 442.5 519.5 438.2 528 438 C536.5 437.8 548.8 440.7 556 446 C563.2 451.3 568.5 466.0 571 470" stroke="#0a0a0a" stroke-width="24"/><path d="M484 465 C487.5 462.0 497.7 451.5 505 447 C512.3 442.5 519.5 438.2 528 438 C536.5 437.8 548.8 440.7 556 446 C563.2 451.3 568.5 466.0 571 470" stroke="#6aa0c7" stroke-width="21.2"/>
<path d="M512 468.5 C508.3 469.4 497.7 471.9 490 474 C482.3 476.1 470.0 479.8 466 481" stroke="#0a0a0a" stroke-width="24"/><path d="M512 468.5 C508.3 469.4 497.7 471.9 490 474 C482.3 476.1 470.0 479.8 466 481" stroke="#6aa0c7" stroke-width="21.2"/>
<path d="M411 406 C411.0 410.3 408.5 423.5 411 432 C413.5 440.5 420.5 449.3 426 457 C431.5 464.7 436.8 470.7 444 478 C451.2 485.3 461.0 495.5 469.5 501 C478.0 506.5 487.8 509.0 495 511 C502.2 513.0 509.6 512.7 512.5 513" stroke="#0a0a0a" stroke-width="24"/><path d="M411 406 C411.0 410.3 408.5 423.5 411 432 C413.5 440.5 420.5 449.3 426 457 C431.5 464.7 436.8 470.7 444 478 C451.2 485.3 461.0 495.5 469.5 501 C478.0 506.5 487.8 509.0 495 511 C502.2 513.0 509.6 512.7 512.5 513" stroke="#6aa0c7" stroke-width="21.2"/>
<path d="M416 470 C415.2 475.8 408.7 494.3 411 505 C413.3 515.7 421.8 526.1 430 534 C438.2 541.9 455.0 549.4 460 552.5" stroke="#0a0a0a" stroke-width="24"/><path d="M416 470 C415.2 475.8 408.7 494.3 411 505 C413.3 515.7 421.8 526.1 430 534 C438.2 541.9 455.0 549.4 460 552.5" stroke="#6aa0c7" stroke-width="21.2"/>
</g>
</svg><!--DRAW-END-->
</div>
</body></html>
